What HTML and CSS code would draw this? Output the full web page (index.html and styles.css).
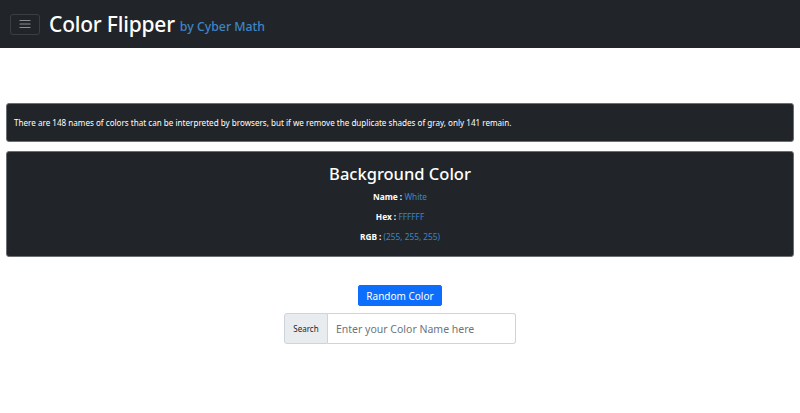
FILE: index.html
```html
<!DOCTYPE html>
<html>
<head>
<meta charset="utf-8">
<link rel="stylesheet" href="styles.css">
</head>
<body>
<nav class="navbar">
  <button class="toggler" aria-label="menu">
    <svg width="12" height="10" viewBox="0 0 12 10"><path d="M1 1.5h10M1 5h10M1 8.5h10" stroke="#8a8d91" stroke-width="1.2" stroke-linecap="round"/></svg>
  </button>
  <span class="brand">Color Flipper</span>
  <span class="by">by Cyber Math</span>
</nav>
<main class="content">
  <div class="card info">There are 148 names of colors that can be interpreted by browsers, but if we remove the duplicate shades of gray, only 141 remain.</div>
  <div class="card color">
    <h2 class="title">Background Color</h2>
    <p class="line"><b>Name :</b> <span class="val">White</span></p>
    <p class="line"><b>Hex :</b> <span class="val">FFFFFF</span></p>
    <p class="line"><b>RGB :</b> <span class="val">(255, 255, 255)</span></p>
  </div>
  <div class="actions">
    <button class="btn">Random Color</button>
    <div class="group">
      <span class="label">Search</span>
      <input class="field" type="text" placeholder="Enter your Color Name here">
    </div>
  </div>
</main>
</body>
</html>
```
FILE: styles.css
```css
* { box-sizing: border-box; }
body {
  margin: 0;
  font-family: "Noto Sans", "DejaVu Sans", sans-serif;
  background: #fff;
  color: #212529;
}
.navbar {
  height: 48px;
  background: #212529;
  display: flex;
  align-items: center;
  padding: 0 10px;
}
.toggler {
  width: 30px;
  height: 21px;
  background: transparent;
  border: 1px solid #3b3f44;
  border-radius: 3px;
  display: flex;
  align-items: center;
  justify-content: center;
  padding: 0;
  margin-right: 9px;
}
.brand {
  color: #fff;
  font-size: 21px;
  font-weight: 500;
  letter-spacing: -0.2px;
}
.by {
  color: #3d86c6;
  font-size: 12.3px;
  font-weight: 500;
  margin-left: 5px;
  margin-top: 5px;
}
.content {
  padding: 55px 6px 0;
  display: flex;
  flex-direction: column;
}
.card {
  background: #212529;
  border: 1px solid #6c6f72;
  border-radius: 3px;
  color: #fff;
}
.info {
  height: 39px;
  display: flex;
  align-items: center;
  padding: 0 7px;
  font-size: 8.1px;
}
.color {
  margin-top: 9px;
  height: 106px;
  text-align: center;
  padding-top: 10px;
}
.title {
  margin: 0 0 2px;
  font-size: 16.5px;
  font-weight: 500;
}
.line {
  margin: 0;
  font-size: 8.3px;
  line-height: 20px;
}
.line b { font-weight: 700; }
.val { color: #3d86c6; }
.actions {
  display: flex;
  flex-direction: column;
  align-items: center;
  margin-top: 28px;
}
.btn {
  background: #0d6efd;
  color: #fff;
  border: 1px solid #0d6efd;
  border-radius: 2px;
  font-family: inherit;
  font-size: 10px;
  width: 84px;
  height: 21px;
  padding: 0;
}
.group {
  margin-top: 7px;
  display: flex;
  width: 232px;
  height: 31px;
}
.label {
  width: 44px;
  background: #e9ecef;
  border: 1px solid #ced4da;
  border-radius: 3px 0 0 3px;
  font-size: 8px;
  display: flex;
  align-items: center;
  justify-content: center;
  color: #212529;
}
.field {
  flex: 1;
  border: 1px solid #ced4da;
  border-left: 0;
  border-radius: 0 3px 3px 0;
  padding: 0 8px;
  font-family: inherit;
  font-size: 10.5px;
  color: #212529;
}
.field::placeholder { color: #6c757d; }
```
